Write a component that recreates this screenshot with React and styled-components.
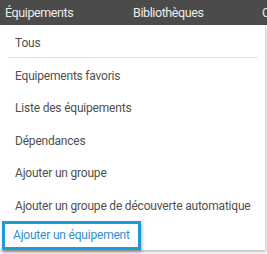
import React from 'react';
import styled, { createGlobalStyle } from 'styled-components';

const GlobalStyle = createGlobalStyle`
  html, body {
    margin: 0;
    padding: 0;
    background: #dcdcdc;
    font-family: Roboto, "Liberation Sans", sans-serif;
    overflow: hidden;
  }
`;

const Page = styled.div`
  width: 267px;
  height: 254px;
  background: #fff;
  overflow: hidden;
`;

const TopBar = styled.div`
  height: 25px;
  background: #4b4b4b;
  display: flex;
  align-items: center;
  color: #ececec;
  font-size: 12.5px;
  letter-spacing: -0.4px;
  white-space: nowrap;
`;

const TopItem = styled.span`
  width: ${(p) => p.$width}px;
  padding-left: ${(p) => p.$pad}px;
  flex-shrink: 0;
`;

const Menu = styled.div`
  width: 265px;
  height: 225px;
  background: #fff;
  border-right: 1px solid #d6d6d6;
  box-shadow: 0 2px 3px rgba(0, 0, 0, 0.25);
  display: flex;
  flex-direction: column;
`;

const Item = styled.div`
  box-sizing: border-box;
  height: ${(p) => p.$h || 32.5}px;
  display: flex;
  align-items: center;
  padding: 3px 0 0 15px;
  font-size: 12px;
  letter-spacing: -0.2px;
  color: #505050;
  white-space: nowrap;
  flex-shrink: 0;
`;

const Divider = styled.div`
  height: 1px;
  margin: 0 7px 0 8px;
  background: #e2e2e2;
  flex-shrink: 0;
`;

const Highlight = styled.div`
  align-self: flex-start;
  margin: 0 0 0 2px;
  height: 25px;
  display: flex;
  align-items: center;
  padding: 0 8px 0 8px;
  border: 3px solid #1e9bd7;
  box-shadow: 1px 2px 3px rgba(0, 0, 0, 0.3);
  font-size: 12px;
  letter-spacing: -0.2px;
  color: #2f8fd0;
  background: #fff;
  white-space: nowrap;
`;

const items = [
  'Equipements favoris',
  'Liste des équipements',
  'Dépendances',
  'Ajouter un groupe',
  'Ajouter un groupe de découverte automatique',
];

export default function App() {
  return (
    <Page>
      <GlobalStyle />
      <TopBar>
        <TopItem $width={123} $pad={5}>Équipements</TopItem>
        <TopItem $width={123} $pad={5}>Bibliothèques</TopItem>
        <TopItem $width={20} $pad={6}>C</TopItem>
      </TopBar>
      <Menu>
        <Item $h={32}>Tous</Item>
        <Divider />
        {items.map((label) => (
          <Item key={label}>{label}</Item>
        ))}
        <Highlight>Ajouter un équipement</Highlight>
      </Menu>
    </Page>
  );
}
